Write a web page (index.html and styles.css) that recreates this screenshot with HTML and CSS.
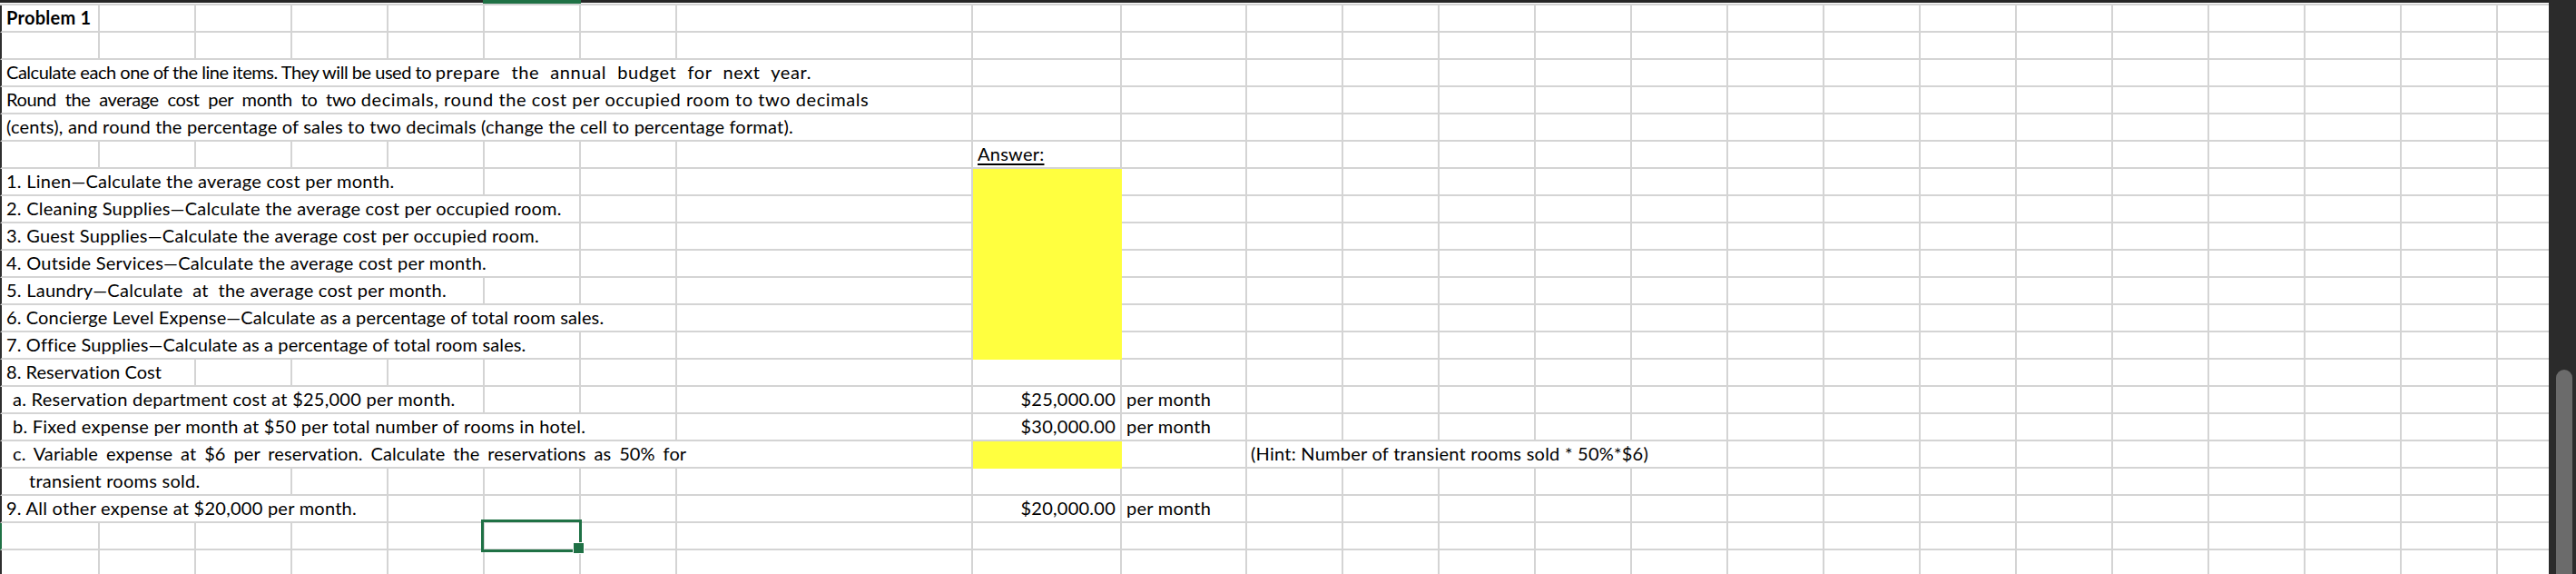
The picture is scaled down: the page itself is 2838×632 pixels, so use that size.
FILE: index.html
```html
<!DOCTYPE html>
<html lang="en">
<head>
<meta charset="utf-8">
<title>Problem 1</title>
<link rel="stylesheet" href="styles.css">
</head>
<body>
<div class="workbook">
  <div class="pane">
    <div class="colheads"><div class="colhead-sel"></div></div>
    <div class="sheet">
      <div class="row"><div class="cell b">Problem 1</div></div>
      <div class="row"></div>
      <div class="row"><div class="cell to-h"><span class="tight1">Calculate each one of the line items. They will be used to </span><span class="wide1">prepare the annual budget for next year.</span></div></div>
      <div class="row"><div class="cell to-h"><span class="wide2">Round the average cost per month to two</span><span class="loose2"> decimals, round the cost per occupied room to two decimals</span></div></div>
      <div class="row"><div class="cell to-h snug">(cents), and round the percentage of sales to two decimals (change the cell to percentage format).</div></div>
      <div class="row"><div class="cell col-i"><span class="u">Answer:</span></div></div>
      <div class="row"><div class="cell to-e">1. Linen—Calculate the average cost per month.</div><div class="cell col-i fill"></div></div>
      <div class="row"><div class="cell to-f">2. Cleaning Supplies—Calculate the average cost per occupied room.</div><div class="cell col-i fill"></div></div>
      <div class="row"><div class="cell to-f">3. Guest Supplies—Calculate the average cost per occupied room.</div><div class="cell col-i fill"></div></div>
      <div class="row"><div class="cell to-f">4. Outside Services—Calculate the average cost per month.</div><div class="cell col-i fill"></div></div>
      <div class="row"><div class="cell to-e">5. Laundry—Calculate  at  the average cost per month.</div><div class="cell col-i fill"></div></div>
      <div class="row"><div class="cell to-g snugger">6. Concierge Level Expense—Calculate as a percentage of total room sales.</div><div class="cell col-i fill"></div></div>
      <div class="row"><div class="cell to-f snugger">7. Office Supplies—Calculate as a percentage of total room sales.</div><div class="cell col-i fill"></div></div>
      <div class="row"><div class="cell to-b flat">8. Reservation Cost</div></div>
      <div class="row"><div class="cell to-e indent1">a. Reservation department cost at $25,000 per month.</div><div class="cell col-i num">$25,000.00</div><div class="cell col-j">per month</div></div>
      <div class="row"><div class="cell to-g indent1">b. Fixed expense per month at $50 per total number of rooms in hotel.</div><div class="cell col-i num">$30,000.00</div><div class="cell col-j">per month</div></div>
      <div class="row"><div class="cell to-h indent1 wide3">c. Variable expense at $6 per reservation. Calculate the reservations as 50% for</div><div class="cell col-i fill"></div><div class="cell hint">(Hint: Number of transient rooms sold * 50%*$6)</div></div>
      <div class="row"><div class="cell to-c indent2">transient rooms sold.</div></div>
      <div class="row"><div class="cell to-d">9. All other expense at $20,000 per month.</div><div class="cell col-i num">$20,000.00</div><div class="cell col-j">per month</div></div>
      <div class="row active"><div class="cell sel"></div></div>
      <div class="row"></div>
    </div>
  </div>
  <div class="vscroll"><div class="thumb"></div></div>
</div>
</body>
</html>
```
FILE: styles.css
```css
:root {
  --cols: 108px repeat(6, 106px) 326px 164px 138px repeat(13, 106px) 56px;
  --grid: #d4d4d4;
  --green: #1f7145;
}
* { box-sizing: border-box; }
html, body { margin: 0; padding: 0; }
body {
  width: 2838px;
  height: 632px;
  overflow: hidden;
  background: #fff;
  color: #000;
  font-family: Lato, "Open Sans", sans-serif;
  font-size: 20px;
  letter-spacing: 0.25px;
}
.workbook { display: flex; height: 632px; }
.pane { width: 2808px; flex: none; overflow: hidden; }
.colheads {
  display: grid;
  grid-template-columns: var(--cols);
  height: 4px;
  padding-left: 2px;
  background: linear-gradient(#262626 0 3px, #fff 3px);
}
.colhead-sel { grid-column: 6; margin-left: -2px; background: var(--green); }
.sheet { border-top: 2px solid var(--grid); }
.row {
  display: grid;
  grid-template-columns: var(--cols);
  grid-template-rows: 28px;
  height: 30px;
  border-left: 2px solid #2e2e2e;
  border-bottom: 2px solid var(--grid);
  background-image:
    linear-gradient(to right,
      transparent 106px, var(--grid) 106px 108px,
      transparent 108px 212px, var(--grid) 212px 214px,
      transparent 214px 318px, var(--grid) 318px 320px,
      transparent 320px 424px, var(--grid) 424px 426px,
      transparent 426px 530px, var(--grid) 530px 532px,
      transparent 532px 636px, var(--grid) 636px 638px,
      transparent 638px 742px, var(--grid) 742px 744px,
      transparent 744px 1068px, var(--grid) 1068px 1070px,
      transparent 1070px 1232px, var(--grid) 1232px 1234px,
      transparent 1234px 1370px, var(--grid) 1370px 1372px,
      transparent 1372px),
    repeating-linear-gradient(to right, transparent 0 104px, var(--grid) 104px 106px);
  background-repeat: no-repeat;
  background-position: 0 0, 1372px 0;
  background-size: 100% 28px, 1434px 28px;
}
.row.active { border-left-color: var(--green); }
.cell {
  grid-row: 1;
  min-width: 0;
  margin-right: 2px;
  padding: 2px 5px 0;
  line-height: 22px;
  white-space: pre;
  background: #fff;
}
.b { font-weight: 700; }
.to-b { grid-column: 1 / 3; }
.to-c { grid-column: 1 / 4; }
.to-d { grid-column: 1 / 5; }
.to-e { grid-column: 1 / 6; }
.to-f { grid-column: 1 / 7; }
.to-g { grid-column: 1 / 8; }
.to-h { grid-column: 1 / 9; }
.col-i { grid-column: 9; }
.col-j { grid-column: 10; }
.hint { grid-column: 11 / 16; padding-left: 4px; }
.indent1 { padding-left: 12px; }
.indent2 { padding-left: 30px; }
.num { text-align: right; }
.u { text-decoration: underline; text-decoration-thickness: 2px; text-underline-offset: 3px; }
.tight1 { letter-spacing: -0.47px; }
.wide1 { letter-spacing: 0.6px; word-spacing: 6.5px; }
.wide2 { letter-spacing: -0.37px; word-spacing: 5px; }
.loose2 { letter-spacing: 0.58px; }
.wide3 { letter-spacing: 0.1px; word-spacing: 3.7px; }
.snug { letter-spacing: 0.2px; }
.snugger { letter-spacing: 0.13px; }
.flat { letter-spacing: 0.04px; }
.fill { background: #ffff3f; margin: 0 0 -2px; }
.sel { grid-column: 6; position: relative; background: transparent; }
.sel::before {
  content: "";
  position: absolute;
  left: -4px; top: -4px; right: -3px; bottom: -4px;
  border: 3px solid var(--green);
}
.sel::after {
  content: "";
  position: absolute;
  right: -6px; bottom: -6px;
  width: 11px; height: 11px;
  background: var(--green);
  border: 1px solid #fff;
}
.vscroll {
  width: 30px;
  flex: none;
  background: #2b2b2b;
  padding: 407px 4px 0 8px;
}
.thumb { height: 100%; background: #6b6b6b; border-radius: 9px 9px 0 0; }
```
